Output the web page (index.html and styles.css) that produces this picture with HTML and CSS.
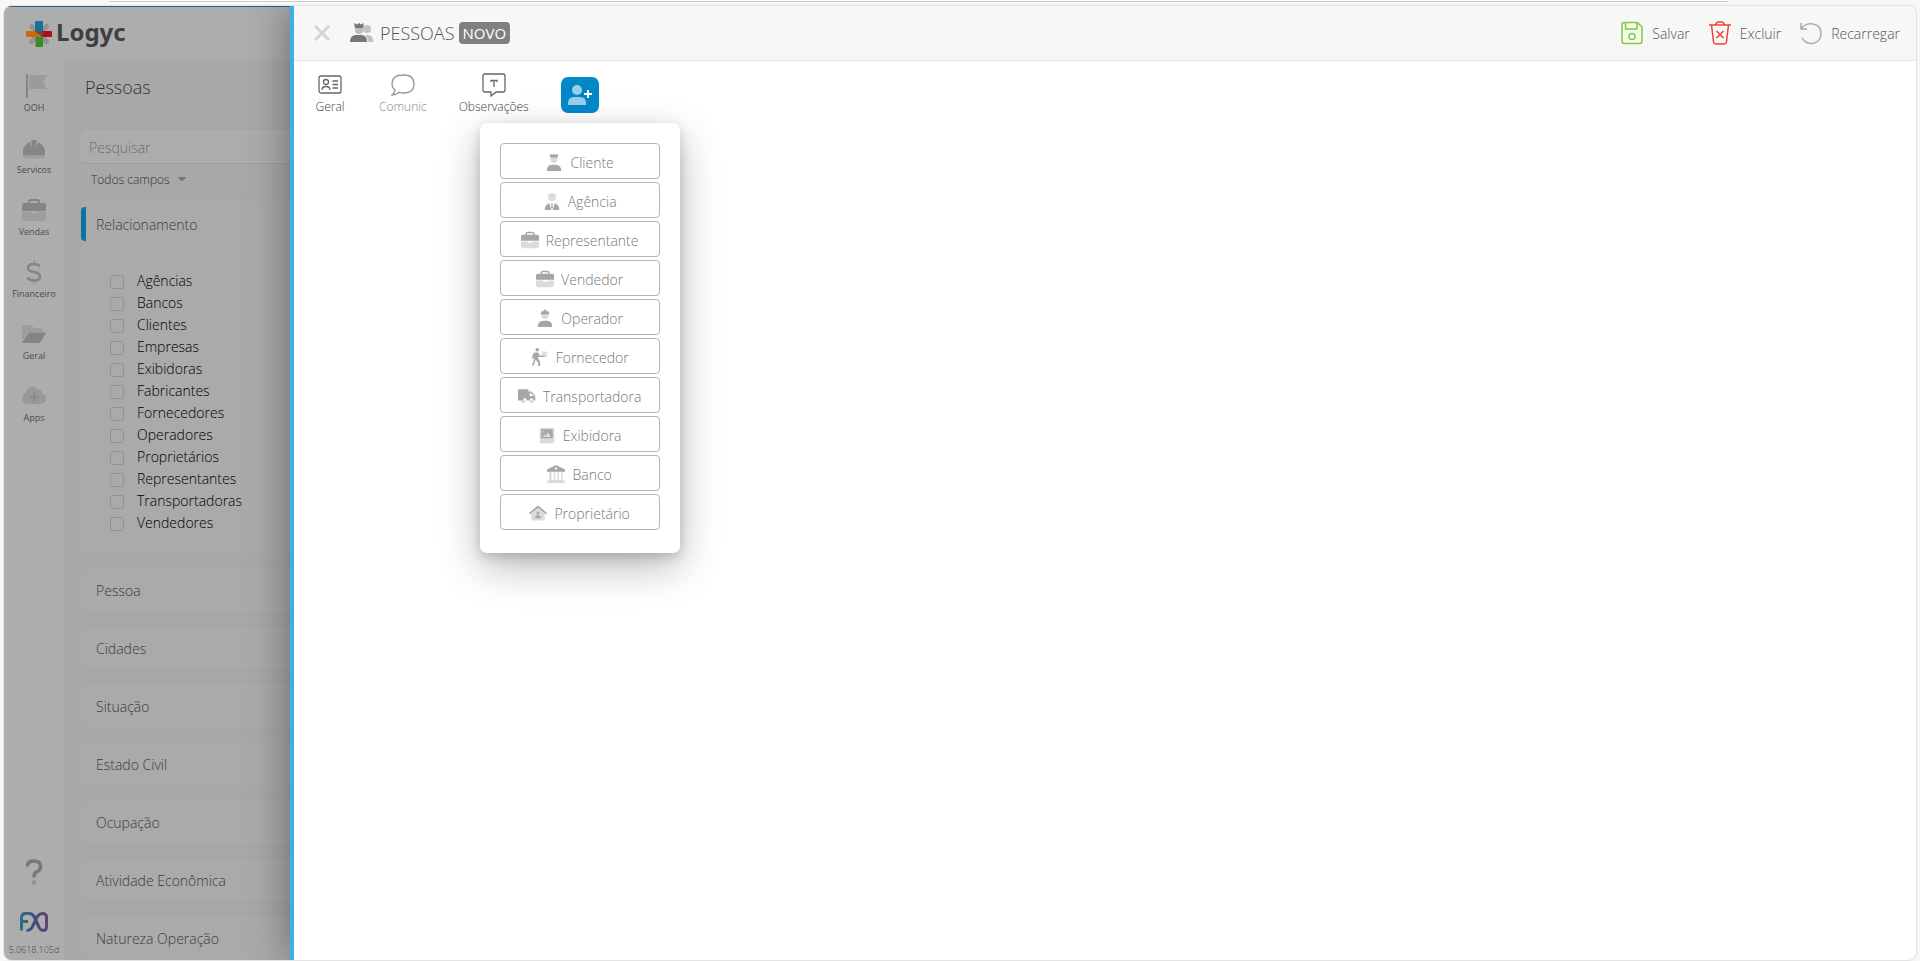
FILE: index.html
```
<!DOCTYPE html>
<html lang="pt-BR">
<head>
    <meta charset="UTF-8">
    <meta name="viewport" content="width=device-width, initial-scale=1.0">
    <title>Logyc - Pessoas</title>
    <link rel="stylesheet" href="styles.css">
</head>
<body>
    <svg class="sprite" aria-hidden="true">
        <symbol id="briefcase" viewBox="0 0 24 24">
            <path d="M6 5V3.500Q6 1 8.500 1h7Q18 1 18 3.500V5h4q2 0 2 2v6H0V7q0-2 2-2zM8 5h8V3H8z"/>
            <path opacity=".4" d="M0 14h9v1.500h6V14h9v6q0 3-3 3H3q-3 0-3-3z"/>
        </symbol>
        <symbol id="plus-user" viewBox="0 0 24 20">
            <g opacity=".6"><circle cx="9" cy="5" r="5"/><path d="M0 20v-2q0-6 6-6h6q6 0 6 6v2z"/></g>
            <path d="M19 5h2v3h3v2h-3v3h-2v-3h-3V8h3z"/>
        </symbol>
    </svg>

    <div class="address-bar"></div>
    <div class="app">
        <aside class="sidebar">
            <header class="brand">
                <svg class="brand-mark" viewBox="0 0 26 26">
                    <path d="M5.500 5.500l15 15M20.500 5.500l-15 15" stroke="#929297" stroke-width="5" stroke-linecap="round"/>
                    <path d="M10 0h6q1 0 1 1v9H9V1q0-1 1-1z" fill="#176fa0"/>
                    <path d="M9.500 16H17v9q0 1-1 1h-5.500q-1 0-1-1z" fill="#398c24"/>
                    <path d="M1 10h12v6H1q-1 0-1-1v-4q0-1 1-1z" fill="#c66a0c"/>
                    <path d="M9 10h16q1 0 1 1v4q0 1-1 1h-9z" fill="#a90f1b"/>
                    <path d="M9 10h8v6z" fill="#704a36"/>
                </svg>
                <span class="brand-name">Logyc</span>
            </header>
            <div class="sidebar-body">
                <nav class="rail">
                    <a href="#" class="rail-item">
                        <svg viewBox="0 0 24 24"><path d="M4 0h2v24H4z"/><path opacity=".45" d="M7 1h18l-4 7 4 7H7z"/></svg>
                        <span>OOH</span>
                    </a>
                    <a href="#" class="rail-item">
                        <svg viewBox="0 0 24 24"><path d="M1 19v-3q0-7 7-10l1.500 6V4h5v8L16 6q7 3 7 10v3z"/><path opacity=".4" d="M1 19h22v2q-3 1.500-11 1.500T1 21z"/></svg>
                        <span>Servicos</span>
                    </a>
                    <a href="#" class="rail-item">
                        <svg viewBox="0 0 24 24"><use href="#briefcase"/></svg>
                        <span>Vendas</span>
                    </a>
                    <a href="#" class="rail-item">
                        <svg viewBox="0 0 24 24"><path fill="none" stroke="currentColor" stroke-width="2.500" d="M18 6.500Q16 4 12 4 6 4 6 8q0 3 6 4t6 4.500q0 4-6 4-4 0-7-3"/><path opacity=".5" d="M11 0h2v4h-2zM11 20h2v4h-2z"/></svg>
                        <span>Financeiro</span>
                    </a>
                    <a href="#" class="rail-item">
                        <svg viewBox="0 0 24 24"><path opacity=".4" d="M0 5q0-2 2-2h7l3 3h7q2 0 2 2v2H7q-2 0-3 2l-4 8z"/><path d="M5 12.500q1-2 3-2h16l-5 9q-1 1.500-3 1.500H0z"/></svg>
                        <span>Geral</span>
                    </a>
                    <a href="#" class="rail-item">
                        <svg viewBox="0 0 24 24"><path opacity=".5" d="M5 20q-5-1-5-6 0-4 4-5.500Q5 3 10 3q4 0 6 3 4-1 4.500 4Q24 11 24 15t-5 5z"/><path d="M11.500 9h1.500v3.500h3.500V14H13v3.500h-1.500V14H8v-1.500h3.500z"/></svg>
                        <span>Apps</span>
                    </a>
                    <div class="rail-foot">
                        <a href="#" class="help" aria-label="Ajuda">
                            <svg viewBox="0 0 18 26"><path fill="none" stroke="currentColor" stroke-width="3.500" stroke-linecap="round" d="M2.500 6Q3.500 2 9 2q6.500 0 6.500 5.500 0 3.500-4 5.500-2.500 1.500-2.500 4"/><circle opacity=".5" cx="9" cy="23.500" r="2.300"/></svg>
                        </a>
                        <svg class="fx" viewBox="0 0 28 20">
                            <defs>
                                <linearGradient id="fxColor"><stop offset="0" stop-color="#2c6d86"/><stop offset=".5" stop-color="#414a80"/><stop offset="1" stop-color="#5c4478"/></linearGradient>
                            </defs>
                            <path fill="none" stroke="url(#fxColor)" stroke-width="3" d="M9 1.500Q1.500 0 1.500 6v12.500M2 9.500h6M9 1.500q4 0 6 5l3 6.500q2 5.500 5 5.500 3.500 0 3.500-4v-9q0-4-4-4-4 0-6.500 5.500l-3 6.500Q11 18.500 6.500 18.500"/>
                        </svg>
                        <span class="version">5.0618.105d</span>
                    </div>
                </nav>
                <section class="filters">
                    <h1>Pessoas</h1>
                    <input class="search" type="text" placeholder="Pesquisar" aria-label="Pesquisar">
                    <select class="field-select" aria-label="Campos da pesquisa">
                        <option>Todos campos</option>
                    </select>
                    <div class="card open">
                        <button type="button" class="card-title">Relacionamento</button>
                        <div class="checks">
                            <label><input type="checkbox">Agências</label>
                            <label><input type="checkbox">Bancos</label>
                            <label><input type="checkbox">Clientes</label>
                            <label><input type="checkbox">Empresas</label>
                            <label><input type="checkbox">Exibidoras</label>
                            <label><input type="checkbox">Fabricantes</label>
                            <label><input type="checkbox">Fornecedores</label>
                            <label><input type="checkbox">Operadores</label>
                            <label><input type="checkbox">Proprietários</label>
                            <label><input type="checkbox">Representantes</label>
                            <label><input type="checkbox">Transportadoras</label>
                            <label><input type="checkbox">Vendedores</label>
                        </div>
                    </div>
                    <div class="card"><button type="button" class="card-title">Pessoa</button></div>
                    <div class="card"><button type="button" class="card-title">Cidades</button></div>
                    <div class="card"><button type="button" class="card-title">Situação</button></div>
                    <div class="card"><button type="button" class="card-title">Estado Civil</button></div>
                    <div class="card"><button type="button" class="card-title">Ocupação</button></div>
                    <div class="card"><button type="button" class="card-title">Atividade Econômica</button></div>
                    <div class="card"><button type="button" class="card-title">Natureza Operação</button></div>
                </section>
            </div>
        </aside>

        <main class="drawer">
            <header class="drawer-head">
                <button type="button" class="close" aria-label="Fechar">
                    <svg viewBox="0 0 16 16"><path stroke="currentColor" stroke-width="3" d="M1 1l14 14M15 1L1 15"/></svg>
                </button>
                <svg class="people" viewBox="0 0 24 20">
                    <g opacity=".4"><circle cx="17" cy="6" r="4"/><path d="M15 12h3q5 0 5.500 7H18q0-4-3-7z"/></g>
                    <path opacity=".45" d="M5 5h8v2q0 4-4 4T5 7z"/>
                    <path d="M4 0l3 1.500L9 0l2 1.500L14 0l-1 5H5zM0 19q0-7 6-7h5q6 0 6 7z"/>
                </svg>
                <h2>PESSOAS</h2>
                <span class="badge">NOVO</span>
                <div class="actions">
                    <button type="button">
                        <svg class="green" viewBox="0 0 22 24"><path fill="#f3ffe6" d="M3 1.500h13.500L21 6v14q0 2.500-2.500 2.500H3.500Q1 22.500 1 20V4q0-2.500 2-2.500z"/><path d="M4.500 1.500V8H16V1.500"/><circle cx="11" cy="15.500" r="3"/></svg>
                        Salvar
                    </button>
                    <button type="button">
                        <svg class="red" viewBox="0 0 22 24"><path d="M2.500 4l2 16.500q.300 2.500 3 2.500h7q2.700 0 3-2.500l2-16.500M0 4h22M6.500 4q1-3 3-3h3q2 0 3 3M7.500 10l7 7M14.500 10l-7 7"/></svg>
                        Excluir
                    </button>
                    <button type="button">
                        <svg class="gray" viewBox="0 0 22 24"><path d="M1 2v6h6M1 8C6 0 21 1 21 12.500 21 24 6 26 2 16.500"/></svg>
                        Recarregar
                    </button>
                </div>
            </header>

            <nav class="tabs">
                <button type="button" class="tab">
                    <svg viewBox="0 0 24 24"><rect x="1" y="3" width="22" height="17" rx="2"/><circle cx="8" cy="9" r="2.500"/><path d="M4 17q0-3.500 4-3.500t4 3.500M14.500 8H20M14.500 11.500H20M14.500 15H20"/></svg>
                    Geral
                </button>
                <button type="button" class="tab muted">
                    <svg viewBox="0 0 24 24"><path d="M1 22q3-2.500 3-5-3-2.500-3-6Q1 2 12.500 2 23 2 23 11t-10.500 9q-2.500 0-4.500-.700Q5 22 1 22z"/></svg>
                    Comunic
                </button>
                <button type="button" class="tab">
                    <svg viewBox="0 0 24 24"><path d="M3 1h18q2 0 2 2v14q0 2-2 2h-7l-5 4v-4H3q-2 0-2-2V3q0-2 2-2z"/><path d="M9 9V7.500h6V9M12 7.500V14"/></svg>
                    Observações
                </button>
                <div class="add-wrap">
                    <button type="button" class="add" aria-label="Adicionar relacionamento">
                        <svg viewBox="0 0 24 20"><use href="#plus-user"/></svg>
                    </button>
                    <div class="menu">
                        <button type="button">
                            <svg viewBox="0 0 18 20"><path opacity=".4" d="M5 4h8v3q0 4-4 4T5 7z"/><path d="M4 1l3 1 2-1 2 1 3-1-1 4H5zM1 20q0-7 6-7h4q6 0 6 7z"/></svg>
                            Cliente
                        </button>
                        <button type="button">
                            <svg viewBox="0 0 18 20"><circle opacity=".4" cx="9" cy="5.500" r="4.500"/><path d="M1 20q0-6 5-7.500L8 20zM17 20q0-6-5-7.500L10 20zM8 12.500h2l-.500 2 .500 3-1 2-1-2 .500-3z"/></svg>
                            Agência
                        </button>
                        <button type="button">
                            <svg viewBox="0 0 24 24"><use href="#briefcase"/></svg>
                            Representante
                        </button>
                        <button type="button">
                            <svg viewBox="0 0 24 24"><use href="#briefcase"/></svg>
                            Vendedor
                        </button>
                        <button type="button">
                            <svg viewBox="0 0 18 20"><path opacity=".4" d="M5 6h8v1q0 4-4 4T5 7z"/><path d="M4 6q0-3 3-4.500L8 4V.500h2V4l1-2.500Q14 3 14 6zM1 20q0-7 6-7h4q6 0 6 7z"/></svg>
                            Operador
                        </button>
                        <button type="button">
                            <svg viewBox="0 0 18 20"><path opacity=".35" d="M11 4h6v6h-6z"/><circle cx="6" cy="2" r="2"/><path d="M3 5h4l2 3.500h5V10H8L7 9v3l2 3v5H7v-4l-3-3-1 4-1.500 3L0 19l2-4 1-6-1 3H0l1-5z"/></svg>
                            Fornecedor
                        </button>
                        <button type="button">
                            <svg viewBox="0 0 24 20"><path d="M1 1h13v3h4l5 6v6h-2q-1-3-3-3t-3 3h-3q-1-3-3-3t-3 3H0V2zM15.500 6v4H21l-4-4z"/><g opacity=".4"><circle cx="7" cy="17" r="2.500"/><circle cx="18" cy="17" r="2.500"/></g></svg>
                            Transportadora
                        </button>
                        <button type="button">
                            <svg viewBox="0 0 22 20"><path opacity=".4" d="M4 1h14q2 0 2 2v15q0 2-2 2H4q-2 0-2-2V3q0-2 2-2z"/><path fill-rule="evenodd" d="M4 3h14v11H4zM6 12.500h10.500L12 7l-3 4-1.500-1.500zM6 5v2h2V5z"/></svg>
                            Exibidora
                        </button>
                        <button type="button">
                            <svg viewBox="0 0 24 24"><path fill-rule="evenodd" d="M0 6l12-6 12 6v3H0zm12-3a1.500 1.500 0 100 3 1.500 1.500 0 000-3z"/><path opacity=".4" d="M3 9h3v11h3V9h2v11h3V9h2v11h3V9h2v11l3 2v2H0v-2l3-2z"/></svg>
                            Banco
                        </button>
                        <button type="button">
                            <svg viewBox="0 0 24 20"><path opacity=".4" d="M3 11l9-8 9 8v7q0 2-2 2H5q-2 0-2-2z"/><path d="M0 10L12 0l12 10-1.500 1.500L12 3 1.500 11.500z"/><circle cx="12" cy="10" r="2"/><path d="M8 17q0-4 4-4t4 4z"/></svg>
                            Proprietário
                        </button>
                    </div>
                </div>
            </nav>
        </main>
    </div>
</body>
</html>
```
FILE: styles.css
```
* {
    box-sizing: border-box;
}
body {
    font-family: "Open Sans", "Noto Sans", sans-serif;
    font-size: 14px;
    font-weight: 300;
    margin: 0;
    height: 100vh;
    display: flex;
    flex-direction: column;
    padding: 0 4px 1px;
    background-color: #f8f8f8;
    color: #555;
    overflow: hidden;
}
button, input, select {
    font: inherit;
    color: inherit;
}
button {
    background: none;
    border: none;
    padding: 0;
    cursor: pointer;
}
a {
    color: inherit;
    text-decoration: none;
}
svg {
    display: block;
    fill: currentColor;
    flex-shrink: 0;
}
.sprite {
    display: none;
}
.address-bar {
    height: 2px;
    margin: 0 187px 4px 105px;
    background: white;
    border-bottom: 1px solid #c8cccc;
    border-radius: 0 0 8px 8px;
}
.app {
    flex: 1;
    min-height: 0;
    display: flex;
    border-radius: 8px;
    overflow: hidden;
    background: white;
    box-shadow: 0 0 2px #aaa;
}

/* sidebar */
.sidebar {
    flex: 0 0 286px;
    display: flex;
    flex-direction: column;
    background-color: #adadad;
    border-top: 1px solid #16698f;
}
.brand {
    height: 53px;
    flex-shrink: 0;
    display: flex;
    align-items: center;
    gap: 4px;
    padding-left: 22px;
}
.brand-mark {
    width: 26px;
    height: 26px;
    fill: none;
}
.brand-name {
    font-family: "Noto Sans", sans-serif;
    font-size: 24px;
    font-weight: 700;
    line-height: 26px;
    padding-bottom: 3px;
    color: #3f3f42;
}
.sidebar-body {
    flex: 1;
    min-height: 0;
    display: flex;
}
.rail {
    flex: 0 0 60px;
    display: flex;
    flex-direction: column;
    gap: 20px;
    padding-top: 14px;
    color: #858585;
}
.rail-item {
    height: 42px;
    display: flex;
    flex-direction: column;
    align-items: center;
    gap: 3px;
    font-size: 9px;
    font-weight: 400;
    line-height: 14px;
}
.rail-item svg {
    width: 24px;
    height: 24px;
    overflow: visible;
}
.rail-item span {
    color: #4c4c4c;
}
.rail-foot {
    margin-top: auto;
    padding-bottom: 3px;
    display: flex;
    flex-direction: column;
    align-items: center;
}
.help {
    color: #777;
    margin-bottom: 27px;
}
.help svg {
    width: 18px;
    height: 26px;
}
.fx {
    width: 28px;
    height: 20px;
}
.version {
    font-size: 9px;
    line-height: 14px;
    margin-top: 11px;
    color: #444;
}
.filters {
    flex: 1;
    min-width: 0;
    overflow: hidden;
    padding-left: 17px;
    background-color: #a8a8a8;
    border-top-left-radius: 6px;
}
.filters h1 {
    margin: 15px 4px 31px;
    font-size: 18px;
    font-weight: 300;
    line-height: 25px;
    color: #333;
}
.search {
    display: block;
    width: 100%;
    height: 33px;
    padding: 0 7px;
    border: 1px solid #b1b1b1;
    border-right: none;
    border-bottom-color: #9c9c9c;
    border-radius: 6px 0 0 6px;
    background-color: #acacac;
    outline: none;
}
.search::placeholder {
    color: #6c6c6c;
    opacity: 1;
}
.field-select {
    display: block;
    width: 96px;
    height: 20px;
    margin: 5px 0 12px 10px;
    border: none;
    appearance: none;
    font-size: 12px;
    color: #333;
    background: conic-gradient(from 315deg at 50% 100%, #777 90deg, transparent 0) no-repeat right 1px center / 8px 4px;
    background: linear-gradient(to bottom left, transparent 50%, #777 50%) no-repeat right 1px center / 0 0, conic-gradient(from 315deg at 50% 100%, #777 90deg, transparent 0) no-repeat right 1px center / 8px 4px;
}
.card {
    margin-bottom: 14px;
    border-radius: 4px 0 0 4px;
    background-color: #aaa;
    box-shadow: 0 0 4px rgba(0, 0, 0, 0.02);
}
.card-title {
    display: block;
    width: 100%;
    height: 44px;
    padding-left: 15px;
    text-align: left;
    color: #3c3c3c;
}
.open {
    padding: 6px 0 1px;
}
.open .card-title {
    height: 34px;
    padding-left: 10px;
    border-left: 5px solid #0b74a6;
    border-radius: 4px 0 0 4px;
}
.checks {
    padding: 28px 0 20px 29px;
    color: #000;
}
.checks label {
    display: flex;
    align-items: center;
    gap: 13px;
    height: 22px;
}
.checks input {
    appearance: none;
    width: 14px;
    height: 14px;
    margin: 4px 0 0;
    border: 1px solid #919191;
    border-radius: 3px;
}

/* drawer */
.drawer {
    flex: 1;
    min-width: 0;
    position: relative;
    background: white;
    border-left: 4px solid #3eb0e6;
    box-shadow: 0 0 40px rgba(0, 0, 0, 0.4);
}
.drawer-head {
    height: 55px;
    display: flex;
    align-items: center;
    padding: 0 16px 0 20px;
    background-color: #f7f7f7;
    border-bottom: 1px solid #e4e4e4;
}
.close {
    color: #d4d4d4;
}
.close svg {
    width: 16px;
    height: 16px;
}
.people {
    width: 24px;
    height: 20px;
    margin: 0 6px 0 20px;
    color: #777;
}
.drawer-head h2 {
    margin: 0 4px 0 0;
    font-size: 18px;
    font-weight: 300;
    line-height: 22px;
}
.badge {
    padding: 0 4px;
    border-radius: 4px;
    background-color: #808080;
    color: white;
    font-size: 15px;
    font-weight: 400;
    line-height: 22px;
}
.actions {
    display: flex;
    gap: 19px;
    margin-left: auto;
}
.actions button {
    display: flex;
    align-items: center;
    gap: 9px;
}
.actions svg {
    width: 22px;
    height: 24px;
    fill: none;
    stroke: currentColor;
    stroke-width: 1.5;
}
.green {
    color: #8bc34a;
}
.red {
    color: #ef4136;
}
.gray {
    color: #aaa;
}
.tabs {
    display: flex;
    align-items: flex-start;
    gap: 32px;
    padding: 12px 19px;
}
.tab {
    display: flex;
    flex-direction: column;
    align-items: center;
    gap: 2px;
    min-width: 34px;
    font-size: 12px;
    line-height: 16px;
    color: #444;
}
.tab svg {
    width: 24px;
    height: 24px;
    fill: none;
    stroke: #666;
    stroke-width: 1.3;
}
.tab.muted {
    color: #888;
}
.muted svg {
    stroke: #999;
}
.add-wrap {
    position: relative;
    padding-top: 4px;
}
.add {
    display: flex;
    align-items: center;
    justify-content: center;
    width: 38px;
    height: 36px;
    border-radius: 7px;
    background-color: #0288c8;
    color: white;
}
.add svg {
    width: 24px;
    height: 20px;
}
.menu {
    position: absolute;
    top: 50px;
    left: 50%;
    width: 200px;
    margin-left: -100px;
    padding: 20px 20px 23px;
    display: flex;
    flex-direction: column;
    gap: 3px;
    border-radius: 7px;
    background: white;
    box-shadow: 0 14px 40px rgba(0, 0, 0, 0.28), 0 4px 12px rgba(0, 0, 0, 0.16);
}
.menu button {
    display: flex;
    align-items: center;
    justify-content: center;
    gap: 7px;
    height: 36px;
    padding-top: 2px;
    border: 1px solid #b4b4b4;
    border-radius: 4px;
    color: #777;
}
.menu svg {
    width: 18px;
    height: 18px;
    color: #a6a6a6;
}
```
